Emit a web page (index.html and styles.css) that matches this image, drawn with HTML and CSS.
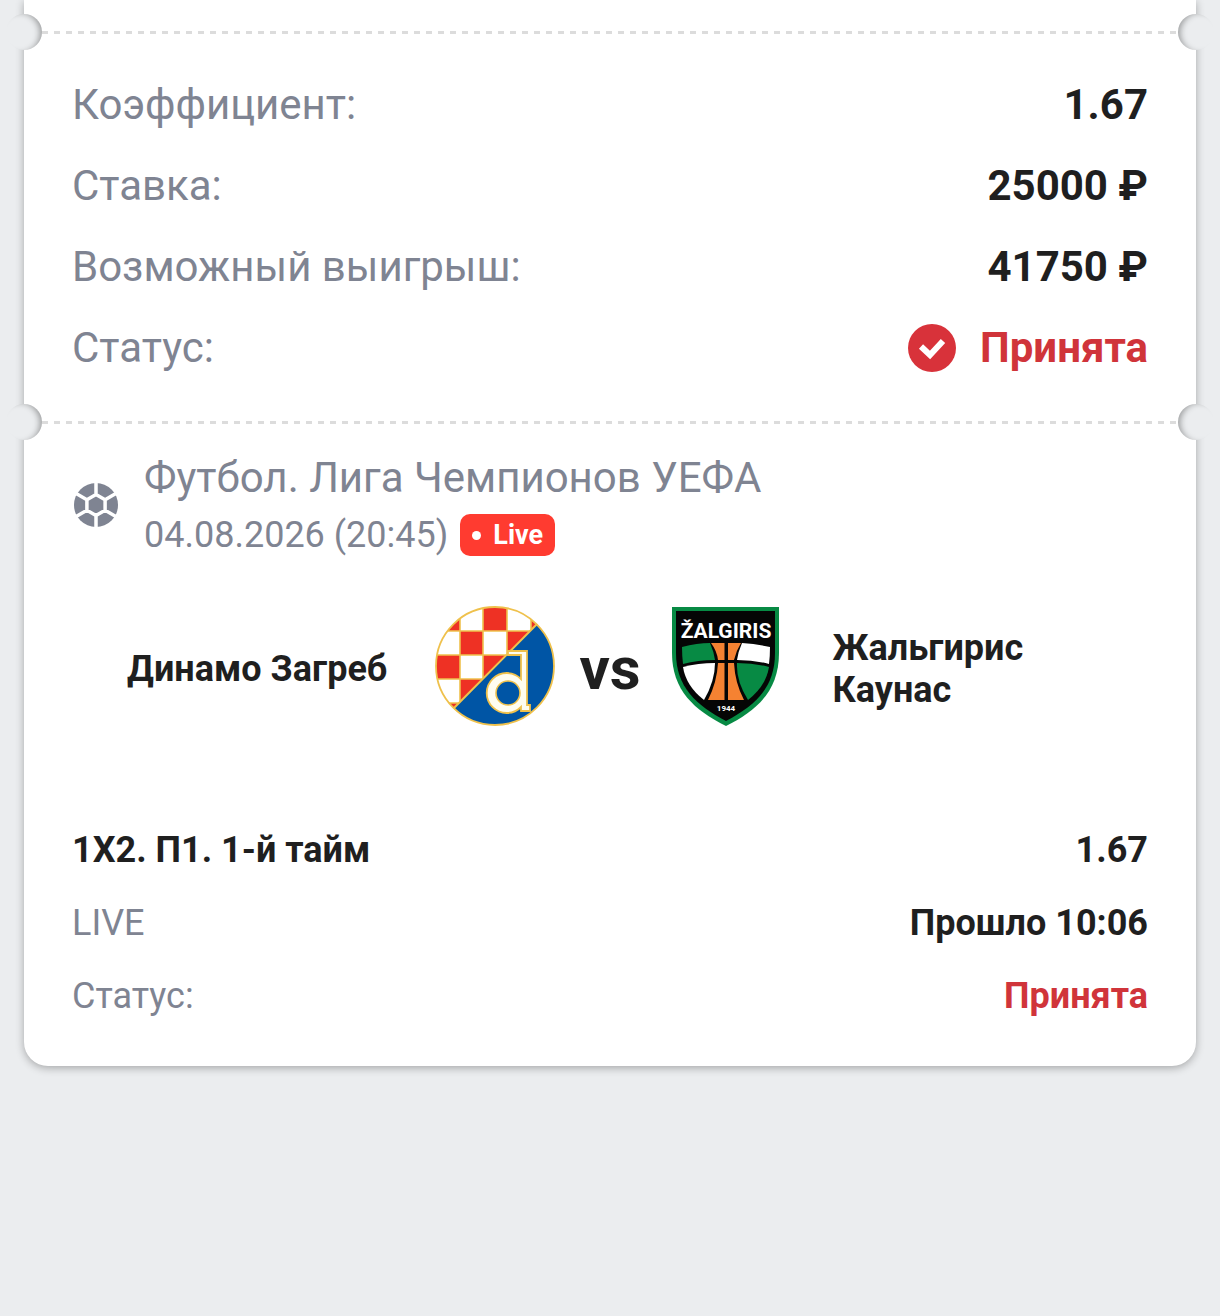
FILE: index.html
```
<!DOCTYPE html>
<html lang="ru">
<head>
    <meta charset="UTF-8">
    <meta name="viewport" content="width=device-width, initial-scale=1.0">
    <title>Купон</title>
    <link rel="stylesheet" href="styles.css">
</head>
<body>
    <main class="coupon">
        <div class="tear"></div>
        <dl class="summary">
            <div class="row">
                <dt>Коэффициент:</dt>
                <dd>1.67</dd>
            </div>
            <div class="row">
                <dt>Ставка:</dt>
                <dd>25000 ₽</dd>
            </div>
            <div class="row">
                <dt>Возможный выигрыш:</dt>
                <dd>41750 ₽</dd>
            </div>
            <div class="row">
                <dt>Статус:</dt>
                <dd class="accepted">
                    <svg class="check" viewBox="0 0 48 48" aria-hidden="true">
                        <circle cx="24" cy="24" r="24" fill="#d8323a"/>
                        <path d="M13 22.500l9 8.500L35 17" fill="none" stroke="#fff" stroke-width="6"/>
                    </svg>
                    Принята
                </dd>
            </div>
        </dl>
        <div class="tear"></div>
        <section class="event">
            <header class="event-header">
                <svg class="ball" viewBox="0 0 48 48" aria-hidden="true">
                    <circle cx="24" cy="24" r="22" fill="#7f8492"/>
                    <path d="M24 13.5l9.1 5.25v10.5L24 34.5l-9.1-5.25v-10.5zM24 13.5V0M33.1 18.75L46 11.3M33.1 29.25L46 36.7M24 34.5V48M14.9 29.25L2 36.7M14.9 18.75L2 11.3" fill="none" stroke="#fff" stroke-width="3.500"/>
                </svg>
                <div class="event-info">
                    <h2>Футбол. Лига Чемпионов УЕФА</h2>
                    <div class="event-date">
                        <time datetime="2026-08-04T20:45">04.08.2026 (20:45)</time>
                        <span class="live">Live</span>
                    </div>
                </div>
            </header>
            <div class="teams">
                <span class="team home">Динамо Загреб</span>
                <div class="versus">
                    <svg class="logo" viewBox="0 0 120 120" role="img" aria-label="Динамо Загреб">
                        <clipPath id="round"><circle cx="60" cy="60" r="59"/></clipPath>
                        <g clip-path="url(#round)">
                            <path d="M0 0h120v120H0z" fill="#fff"/>
                            <path d="M48 0h24v25H48zM0 0h25v25H0zM96 0h24v25H96zM25 25h23v24H25zM72 25h24v24H72zM0 49h25v24H0zM48 49h24v24H48zM25 73h23v24H25zM0 97h25v23H0z" fill="#ee3124"/>
                            <path d="M25 0v120M48 0v120M72 0v120M96 0v120M0 25h120M0 49h120M0 73h120M0 97h120" stroke="#efc14c" stroke-width="1.6"/>
                            <path d="M102 18L19 102v18h101V0z" fill="#0055a5" stroke="#efc14c" stroke-width="2"/>
                        </g>
                        <circle cx="60" cy="60" r="59" fill="none" stroke="#efc14c" stroke-width="1.8"/>
                        <path d="M73 45H92V99H95V105H86V101A20 20 0 1 1 86 73V49H73z" fill="#fffdf0" stroke="#efc14c" stroke-width="1.8"/>
                        <circle cx="73" cy="87" r="12" fill="#0055a5" stroke="#efc14c" stroke-width="1.6"/>
                    </svg>
                    <span class="vs">vs</span>
                    <svg class="logo" viewBox="0 0 120 120" role="img" aria-label="Жальгирис Каунас">
                        <path d="M7 1h107v46c0 37-21 57-53 73C29 104 7 84 7 47z" fill="#078a44"/>
                        <path d="M11 5h99v42c0 34-19 52-49 68C31 99 11 81 11 47z" fill="#050505"/>
                        <path d="M17 41q15-4 28-4 4 9 5 17-17 0-32 4-1-8-1-17z" fill="#078a44"/>
                        <path d="M77 37q15 1 28 4 0 9-1 17-15-4-32-4 1-8 5-17z" fill="#fff"/>
                        <path d="M18 61q15-4 32-4 0 18-11 37-18-14-21-33z" fill="#fff"/>
                        <path d="M72 57q17 0 32 4-3 19-21 33-12-19-11-37z" fill="#078a44"/>
                        <path d="M46 37h13.500v17H53q-1-9-7-17zM63 37h13q-5 8-7 17h-6zM53 57h6.500v37H43q9-18 10-37zM63 57h6q1 20 10 37H63z" fill="#f58232"/>
                        <text class="crest-name" x="61" y="32" text-anchor="middle">ŽALGIRIS</text>
                        <text class="crest-year" x="61" y="105" text-anchor="middle">1944</text>
                    </svg>
                </div>
                <span class="team away">Жальгирис Каунас</span>
            </div>
            <dl class="details">
                <div class="row">
                    <dt class="outcome">1X2. П1. 1-й тайм</dt>
                    <dd>1.67</dd>
                </div>
                <div class="row">
                    <dt>LIVE</dt>
                    <dd>Прошло 10:06</dd>
                </div>
                <div class="row">
                    <dt>Статус:</dt>
                    <dd class="accepted">Принята</dd>
                </div>
            </dl>
        </section>
    </main>
</body>
</html>
```
FILE: styles.css
```
* {
    box-sizing: border-box;
}

body {
    margin: 0;
    background-color: #ebedef;
    color: #1f1f1f;
    font-family: Roboto, sans-serif;
}

h2, dl, dd {
    margin: 0;
}

.coupon {
    margin: 0 24px 48px;
    padding-top: 14px;
    background-color: white;
    border-radius: 0 0 24px 24px;
    box-shadow: 0 2px 8px rgba(0, 0, 0, 0.3);
}

/* perforated line with a round cut-out on each side */
.tear {
    position: relative;
    height: 36px;
    background: repeating-linear-gradient(90deg, #dcdcdc 0 6px, transparent 6px 12px) 18px 17px / calc(100% - 36px) 3px no-repeat;
}

.tear::before,
.tear::after {
    content: '';
    position: absolute;
    top: 0;
    width: 36px;
    height: 36px;
    border-radius: 50%;
    background-color: #ebedef;
}

.tear::before {
    left: -18px;
    box-shadow: inset -5px 1px 6px -3px rgba(0, 0, 0, 0.35);
}

.tear::after {
    right: -18px;
    box-shadow: inset 5px 1px 6px -3px rgba(0, 0, 0, 0.35);
}

.row {
    display: flex;
    justify-content: space-between;
    align-items: center;
}

dt {
    color: #7f8492;
}

dd {
    font-weight: 700;
}

.summary {
    display: flex;
    flex-direction: column;
    gap: 32px;
    padding: 30px 48px 32px;
    font-size: 42px;
    line-height: 49px;
}

.accepted {
    display: flex;
    align-items: center;
    gap: 24px;
    color: #d0343a;
}

.check,
.ball {
    flex: none;
    width: 48px;
    height: 48px;
}

.event {
    padding: 13px 48px 49px;
}

.event-header {
    display: flex;
    align-items: center;
    gap: 24px;
    color: #7f8492;
}

.event-info h2 {
    font-size: 42px;
    font-weight: 400;
    line-height: 50px;
}

.event-date {
    display: flex;
    align-items: center;
    gap: 12px;
    margin-top: 11px;
    font-size: 36px;
    line-height: 42px;
}

.live {
    display: flex;
    align-items: center;
    gap: 12px;
    padding: 0 12px;
    border-radius: 10px;
    background-color: #ff3b30;
    color: white;
    font-size: 27px;
    font-weight: 700;
}

.live::before {
    content: '';
    width: 9px;
    height: 9px;
    border-radius: 50%;
    background-color: white;
}

.teams {
    display: grid;
    grid-template-columns: 1fr auto 1fr;
    align-items: center;
    gap: 48px;
    margin-top: 50px;
    font-size: 36px;
    font-weight: 700;
    line-height: 42px;
}

.team {
    padding-top: 6px;
}

.home {
    text-align: right;
}

.away {
    padding-right: 48px;
}

.versus {
    display: flex;
    align-items: center;
    gap: 24px;
}

.logo {
    width: 120px;
    height: 120px;
}

.vs {
    padding-top: 6px;
    font-size: 60px;
}

.crest-name {
    fill: white;
    font-size: 21px;
    font-weight: 700;
}

.crest-year {
    fill: white;
    font-size: 8px;
    font-weight: 700;
}

.details {
    display: flex;
    flex-direction: column;
    gap: 31px;
    margin-top: 103px;
    font-size: 36px;
    line-height: 42px;
}

.outcome {
    color: #1f1f1f;
    font-weight: 700;
}
```
